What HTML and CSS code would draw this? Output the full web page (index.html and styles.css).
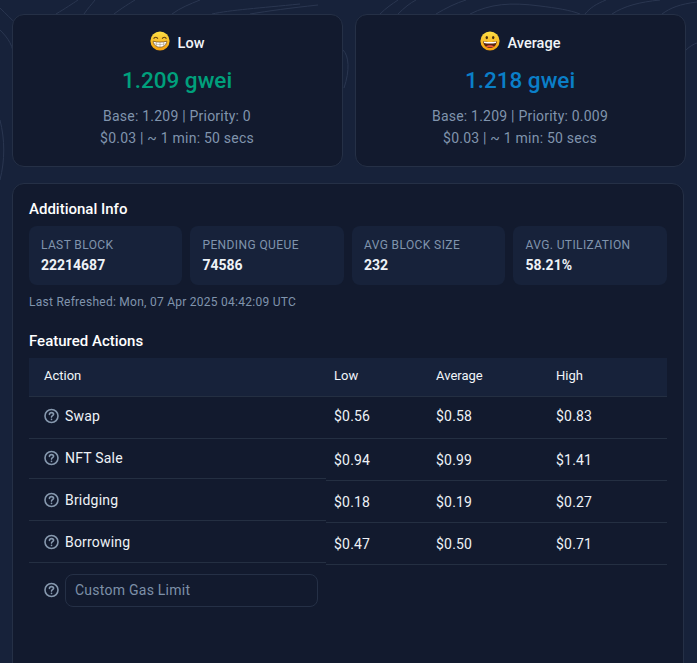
FILE: index.html
```html
<!DOCTYPE html>
<html>
    <head>
        <title>Gas Tracker</title>
        <link rel="stylesheet" href="styles.css">
    </head>
    <body>
        <!-- faint contour lines behind the cards -->
        <svg class="contours" width="697" height="663" viewBox="0 0 697 663" fill="none">
            <path d="M0 8C12 20 22 28 30 45"/>
            <path d="M0 30C8 38 14 46 14 60"/>
            <path d="M0 120C5 140 5 160 0 180"/>
            <path d="M56 14C66 8 72 4 78 0"/>
            <path d="M84 14C88 8 92 4 95 0"/>
            <path d="M114 14C122 8 130 3 135 0"/>
            <path d="M172 14C180 8 190 4 200 0"/>
            <path d="M212 14C230 10 260 8 300 4"/>
            <path d="M250 14C268 11 290 8 318 5"/>
            <path d="M380 14C386 8 392 4 398 0"/>
            <path d="M398 14C404 8 410 3 416 0"/>
            <path d="M436 14C446 8 456 3 466 0"/>
            <path d="M470 14C490 4 510 2 540 6C556 8 570 10 580 14"/>
            <path d="M585 14C590 8 596 4 606 0"/>
            <path d="M612 14C624 6 640 2 660 0"/>
            <path d="M662 14C670 8 680 4 697 2"/>
            <path d="M686 50C690 46 694 44 697 43"/>
            <path d="M343 50C349 56 350 70 344 88"/>
        </svg>

        <div class="page">
            <div class="speed-row">
                <div class="speed-card">
                    <div class="speed-title">
                        <svg class="emoji" width="20" height="20" viewBox="0 0 20 20">
                            <defs>
                                <linearGradient id="face1" x1="0" y1="0" x2="0" y2="1">
                                    <stop offset="0" stop-color="#fde047"/>
                                    <stop offset="1" stop-color="#f59e0b"/>
                                </linearGradient>
                            </defs>
                            <circle cx="10" cy="10" r="9.6" fill="url(#face1)"/>
                            <path d="M3.6 7.6C4.6 5.8 6.8 5.8 7.8 7.6M12.2 7.6C13.2 5.8 15.4 5.8 16.4 7.6" stroke="#5b3a12" stroke-width="1.2" fill="none"/>
                            <path d="M3.2 10.2C7 11.4 13 11.4 16.8 10.2C16.6 14 13.6 16.2 10 16.2C6.4 16.2 3.4 14 3.2 10.2Z" fill="#fff" stroke="#6b4316" stroke-width=".7"/>
                            <path d="M3.6 12.6C7.4 13.8 12.6 13.8 16.4 12.6M6.4 11V15.4M10 11.2V16M13.6 11V15.4" stroke="#9a8a6a" stroke-width=".5" fill="none"/>
                        </svg>
                        <span>Low</span>
                    </div>
                    <div class="speed-price green">1.209 gwei</div>
                    <div class="speed-detail">Base: 1.209 | Priority: 0</div>
                    <div class="speed-detail">$0.03 | ~ 1 min: 50 secs</div>
                </div>
                <div class="speed-card">
                    <div class="speed-title">
                        <svg class="emoji" width="20" height="20" viewBox="0 0 20 20">
                            <defs>
                                <linearGradient id="face2" x1="0" y1="0" x2="0" y2="1">
                                    <stop offset="0" stop-color="#fde047"/>
                                    <stop offset="1" stop-color="#f59e0b"/>
                                </linearGradient>
                            </defs>
                            <circle cx="10" cy="10" r="9.6" fill="url(#face2)"/>
                            <ellipse cx="6.8" cy="6.6" rx="1.2" ry="1.7" fill="#4a2f10"/>
                            <ellipse cx="13.2" cy="6.6" rx="1.2" ry="1.7" fill="#4a2f10"/>
                            <path d="M3.2 10.2C7 11.2 13 11.2 16.8 10.2C16.6 14.4 13.6 17 10 17C6.4 17 3.4 14.4 3.2 10.2Z" fill="#5b2410"/>
                            <path d="M3.8 10.4C7.4 11.2 12.6 11.2 16.2 10.4L15.9 12C12.4 12.8 7.6 12.8 4.1 12Z" fill="#fff"/>
                            <path d="M6 15.4C8 13.8 12 13.8 14 15.4C12.6 16.6 7.4 16.6 6 15.4Z" fill="#ef5a3c"/>
                        </svg>
                        <span>Average</span>
                    </div>
                    <div class="speed-price blue">1.218 gwei</div>
                    <div class="speed-detail">Base: 1.209 | Priority: 0.009</div>
                    <div class="speed-detail">$0.03 | ~ 1 min: 50 secs</div>
                </div>
            </div>

            <div class="panel">
                <h3 class="section-title">Additional Info</h3>
                <div class="stat-grid">
                    <div class="stat">
                        <div class="stat-label">LAST BLOCK</div>
                        <div class="stat-value">22214687</div>
                    </div>
                    <div class="stat">
                        <div class="stat-label">PENDING QUEUE</div>
                        <div class="stat-value">74586</div>
                    </div>
                    <div class="stat">
                        <div class="stat-label">AVG BLOCK SIZE</div>
                        <div class="stat-value">232</div>
                    </div>
                    <div class="stat">
                        <div class="stat-label">AVG. UTILIZATION</div>
                        <div class="stat-value">58.21%</div>
                    </div>
                </div>
                <div class="refreshed">Last Refreshed: Mon, 07 Apr 2025 04:42:09 UTC</div>

                <h3 class="section-title featured">Featured Actions</h3>
                <table class="actions">
                    <thead>
                        <tr>
                            <th class="col-action">Action</th>
                            <th class="col-low">Low</th>
                            <th class="col-avg">Average</th>
                            <th>High</th>
                        </tr>
                    </thead>
                    <tbody>
                        <tr class="top-row">
                            <td><div class="action-name"><svg class="help" width="16" height="16" viewBox="0 0 16 16"><use href="#help-icon"/></svg>Swap</div></td>
                            <td>$0.56</td>
                            <td>$0.58</td>
                            <td>$0.83</td>
                        </tr>
                        <tr class="low-values">
                            <td class="shifted"><div class="action-name"><svg class="help" width="16" height="16" viewBox="0 0 16 16"><use href="#help-icon"/></svg>NFT Sale</div></td>
                            <td>$0.94</td>
                            <td>$0.99</td>
                            <td>$1.41</td>
                        </tr>
                        <tr class="low-values">
                            <td class="shifted"><div class="action-name"><svg class="help" width="16" height="16" viewBox="0 0 16 16"><use href="#help-icon"/></svg>Bridging</div></td>
                            <td>$0.18</td>
                            <td>$0.19</td>
                            <td>$0.27</td>
                        </tr>
                        <tr class="low-values">
                            <td class="shifted"><div class="action-name"><svg class="help" width="16" height="16" viewBox="0 0 16 16"><use href="#help-icon"/></svg>Borrowing</div></td>
                            <td>$0.47</td>
                            <td>$0.50</td>
                            <td>$0.71</td>
                        </tr>
                    </tbody>
                </table>
                <div class="custom-gas">
                    <svg class="help" width="16" height="16" viewBox="0 0 16 16">
                        <g id="help-icon" fill="none" stroke="#8698ae" stroke-width="1.6" stroke-linecap="round">
                            <circle cx="7.5" cy="8" r="6.5"/>
                            <path d="M5.4 6.4C5.5 5.2 6.3 4.6 7.5 4.6C8.7 4.6 9.6 5.3 9.6 6.3C9.6 7.7 7.5 7.7 7.5 9.1"/>
                            <path d="M7.5 11.3V11.4"/>
                        </g>
                    </svg>
                    <input class="gas-input" type="text" placeholder="Custom Gas Limit">
                </div>
            </div>
        </div>
    </body>
</html>
```

FILE: styles.css
```css
html, body {
    height: 100%;
    overflow: hidden;
}
body {
    margin: 0;
    background-color: #17223a;
    color: #f1f5f9;
    font-family: Roboto, "Liberation Sans", sans-serif;
    font-size: 14px;
}
.contours {
    position: absolute;
    top: 0;
    left: 0;
}
.contours path {
    stroke: #2a3650;
    stroke-width: 1;
}
.page {
    position: relative;
    padding: 14px 11px 0 12px;
}
.speed-row {
    display: grid;
    grid-template-columns: 1fr 1fr;
    gap: 12px;
}
.speed-card {
    height: 153px;
    box-sizing: border-box;
    padding: 16px 17px 16px 16px;
    background-color: #121a2e;
    border: 1px solid #253046;
    border-radius: 12px;
    text-align: center;
}
.speed-title {
    display: flex;
    justify-content: center;
    align-items: center;
    gap: 8px;
    height: 24px;
    font-size: 14.5px;
    font-weight: 500;
}
.speed-title .emoji {
    position: relative;
    top: -2px;
}
.speed-price {
    margin: 9px 0 9px;
    font-size: 22.5px;
    line-height: 32px;
    font-weight: 500;
}
.green {
    color: #00a07c;
}
.blue {
    color: #0a7fc8;
}
.speed-detail {
    line-height: 22px;
    letter-spacing: .22px;
    color: #8094ad;
}
.panel {
    height: 520px;
    margin: 16px 2px 0 0;
    box-sizing: border-box;
    padding: 15px 16px 16px;
    background-color: #121a2e;
    border: 1px solid #253046;
    border-radius: 12px;
}
.section-title {
    margin: 0 0 7px;
    font-size: 15px;
    line-height: 20px;
    font-weight: 500;
    color: #fff;
}
.stat-grid {
    display: grid;
    grid-template-columns: repeat(4, 1fr);
    gap: 8px;
    margin-left: -.1px;
}
.stat {
    height: 59px;
    box-sizing: border-box;
    padding: 11px 12px;
    background-color: #17223a;
    border-radius: 8px;
}
.stat-label {
    font-size: 12px;
    line-height: 16px;
    letter-spacing: .4px;
    color: #8094ad;
}
.stat-value {
    margin-top: 2px;
    font-size: 14px;
    line-height: 20px;
    font-weight: 700;
    color: #eef2f7;
}
.refreshed {
    margin-top: 9px;
    font-size: 12px;
    line-height: 16px;
    letter-spacing: .26px;
    color: #8094ad;
}
.featured {
    margin-top: 21px;
}
.actions {
    width: 638px;
    border-collapse: collapse;
    table-layout: fixed;
}
.actions th {
    box-sizing: border-box;
    height: 38px;
    padding: 0 0 3px 8px;
    background-color: #17223a;
    border-bottom: 1px solid #242f42;
    font-size: 13px;
    font-weight: 400;
    text-align: left;
    color: #f1f5f9;
}
.actions th.col-action {
    padding-left: 15px;
}
.actions td {
    box-sizing: border-box;
    height: 42px;
    padding: 0 0 0 8px;
    border-bottom: 1px solid #242f42;
    letter-spacing: .2px;
    color: #eef2f7;
}
.actions td:first-child {
    padding-left: 16px;
}
.col-action {
    width: 297px;
}
.col-low {
    width: 102px;
}
.col-avg {
    width: 120px;
}
.action-name {
    display: flex;
    align-items: center;
    gap: 5px;
    margin-left: -1px;
}
.help {
    flex: none;
}
.top-row td {
    padding-bottom: 2px;
}
.low-values td {
    padding-top: 2px;
}
/* the first column lines sit one pixel above the others */
.actions td.shifted {
    position: relative;
    padding-top: 0;
    border-bottom-color: transparent;
}
.actions td.shifted::after {
    content: "";
    position: absolute;
    left: 0;
    right: 0;
    bottom: 1px;
    height: 1px;
    background-color: #242f42;
}
.actions td.shifted .action-name {
    padding-bottom: 2px;
}
.custom-gas {
    display: flex;
    align-items: center;
    gap: 5px;
    margin-top: 9px;
    padding-left: 15px;
}
.gas-input {
    width: 253px;
    height: 33px;
    box-sizing: border-box;
    padding: 0 9px;
    background: transparent;
    border: 1px solid #253046;
    border-radius: 8px;
    font-family: Roboto, "Liberation Sans", sans-serif;
    font-size: 14px;
    letter-spacing: .25px;
    color: #f1f5f9;
}
.gas-input::placeholder {
    color: #7d90a8;
    opacity: 1;
}
```
